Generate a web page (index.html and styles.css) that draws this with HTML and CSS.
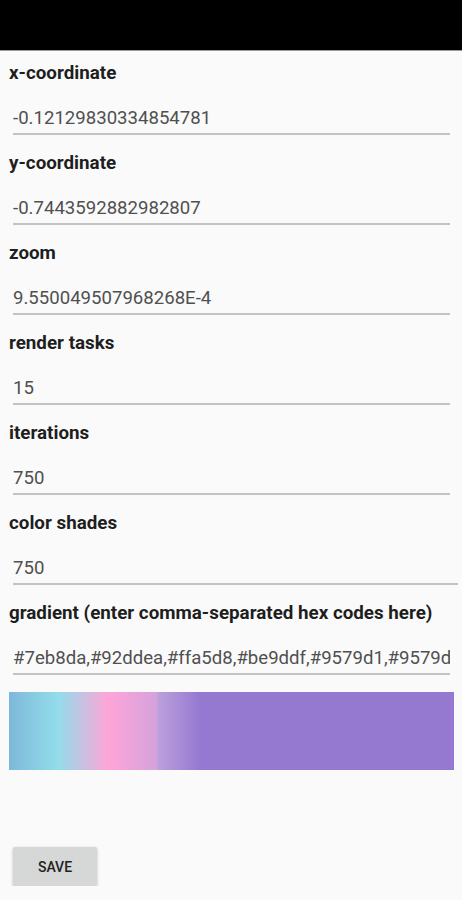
FILE: index.html
```html
<!DOCTYPE html>
<html>
<head>
<meta charset="utf-8">
<link rel="stylesheet" href="styles.css">
</head>
<body>
<div class="topbar"></div>
<main class="form">
  <section class="group">
    <div class="label">x-coordinate</div>
    <div class="field">-0.12129830334854781</div>
  </section>
  <section class="group">
    <div class="label">y-coordinate</div>
    <div class="field">-0.7443592882982807</div>
  </section>
  <section class="group">
    <div class="label">zoom</div>
    <div class="field">9.550049507968268E-4</div>
  </section>
  <section class="group">
    <div class="label">render tasks</div>
    <div class="field">15</div>
  </section>
  <section class="group">
    <div class="label">iterations</div>
    <div class="field">750</div>
  </section>
  <section class="group">
    <div class="label">color shades</div>
    <div class="field field-wide">750</div>
  </section>
  <section class="group">
    <div class="label">gradient (enter comma-separated hex codes here)</div>
    <div class="field">#7eb8da,#92ddea,#ffa5d8,#be9ddf,#9579d1,#9579d1</div>
  </section>
  <div class="gradient"></div>
  <div class="actions">
    <button class="save">SAVE</button>
  </div>
</main>
</body>
</html>
```
FILE: styles.css
```css
html, body {
  margin: 0;
  padding: 0;
  background: #fafafa;
  font-family: Roboto, "Liberation Sans", sans-serif;
}
.topbar {
  height: 50px;
  background: #000;
  border-bottom: 1px solid #9a9a9a;
}
.form {
  padding: 12px 0 0 9px;
  display: flex;
  flex-direction: column;
}
.group {
  display: flex;
  flex-direction: column;
  margin-bottom: 18px;
}
.label {
  font-size: 18.8px;
  font-weight: 700;
  line-height: 20px;
  color: #1e1e1e;
}
.field {
  margin: 23px 0 0 4px;
  width: 437px;
  font-size: 18.6px;
  line-height: 24px;
  color: #505050;
  white-space: nowrap;
  overflow: hidden;
  border-bottom: 2px solid #c2c2c2;
  padding-bottom: 3px;
}
.field-wide {
  width: 445px;
}
.gradient {
  width: 445px;
  height: 78px;
  margin-top: -1px;
  background: linear-gradient(to right,
    #7eb8da 0px,
    #92ddea 49px,
    #ffa5d8 99px,
    #d5a2dc 148px,
    #bca0dc 149px,
    #9579d1 191px,
    #9579d1 100%);
}
.actions {
  margin-top: 77px;
  padding-left: 4px;
}
.save {
  width: 84px;
  height: 39px;
  border: none;
  border-radius: 2px;
  background: #d6d7d7;
  box-shadow: 0 1px 3px rgba(0,0,0,0.25);
  font-family: Roboto, "Liberation Sans", sans-serif;
  font-size: 14px;
  font-weight: 500;
  color: #222;
  padding: 0;
}
```
